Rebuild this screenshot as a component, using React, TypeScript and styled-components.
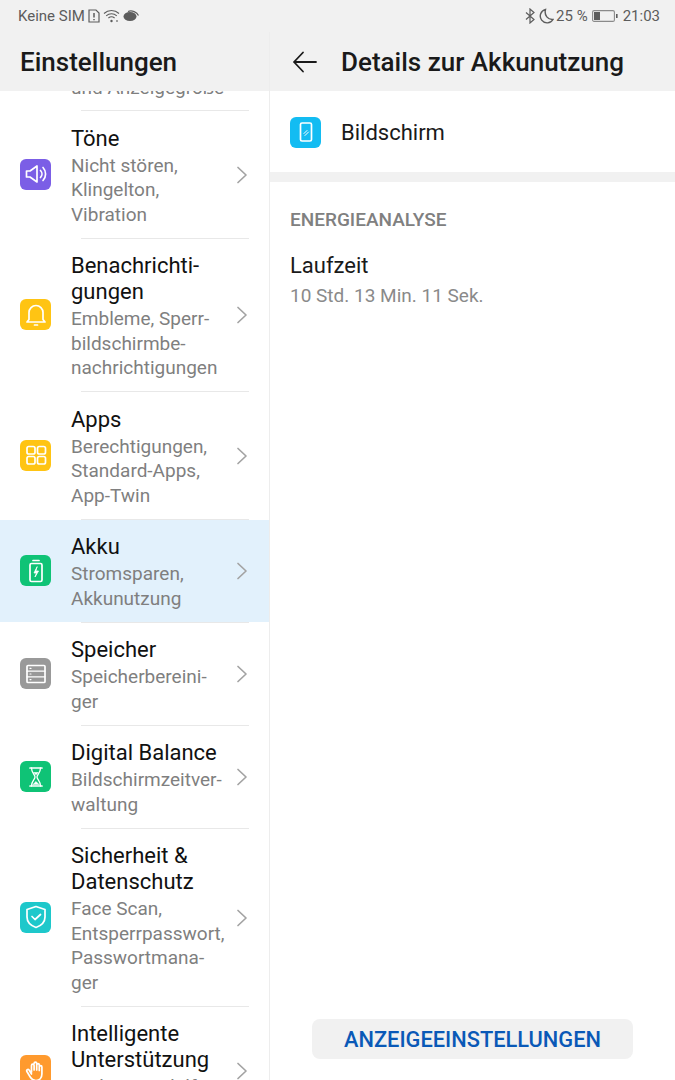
import React from 'react';
import styled, { createGlobalStyle } from 'styled-components';

const GlobalStyle = createGlobalStyle`
  html, body {
    margin: 0;
    padding: 0;
    background: #fff;
    font-family: Roboto, "Liberation Sans", sans-serif;
  }
`;

const Page = styled.div`
  width: 675px;
  height: 1080px;
  display: flex;
  flex-direction: column;
  overflow: hidden;
  background: #fff;
`;

const StatusBar = styled.div`
  height: 32px;
  flex: none;
  display: flex;
  align-items: center;
  justify-content: space-between;
  padding: 0 15px 0 18px;
  background: #f1f1f1;
  color: #5c5c5c;
  font-size: 15px;
`;

const StatusGroup = styled.div`
  display: flex;
  align-items: center;
`;

const StatusIcon = styled.svg<{ $gap?: number }>`
  display: block;
  margin-left: ${(p) => p.$gap ?? 3}px;
`;

const StatusText = styled.span<{ $gap?: number }>`
  margin-left: ${(p) => p.$gap ?? 0}px;
  white-space: nowrap;
`;

const Columns = styled.div`
  flex: 1;
  min-height: 0;
  display: flex;
`;

const LeftPane = styled.div`
  width: 269px;
  flex: none;
  display: flex;
  flex-direction: column;
  border-right: 1px solid #ededed;
  overflow: hidden;
`;

const RightPane = styled.div`
  flex: 1;
  display: flex;
  flex-direction: column;
`;

const Header = styled.div`
  height: 59px;
  flex: none;
  display: flex;
  align-items: center;
  background: #f1f1f1;
`;

const HeaderTitle = styled.h1<{ $left: number }>`
  margin: 0 0 0 ${(p) => p.$left}px;
  font-size: 26px;
  font-weight: 500;
  color: #1a1a1a;
  white-space: nowrap;
`;

const BackButton = styled.svg`
  display: block;
  margin-left: 22px;
`;

/* the row above Töne is scrolled almost out of the list, only its last line peeks out */
const ClippedRow = styled.div`
  height: 19px;
  flex: none;
  padding-left: 71px;
  overflow: hidden;
`;

const ClippedText = styled.div`
  margin-top: -15px;
  font-size: 19px;
  line-height: 24.75px;
  color: #7f7f7f;
  white-space: nowrap;
`;

const Row = styled.div<{ $active?: boolean }>`
  flex: none;
  display: flex;
  align-items: center;
  padding: 0 21px 0 20px;
  background: ${(p) => (p.$active ? '#e2f1fc' : 'transparent')};
`;

const DividerLine = styled.div`
  height: 1px;
  flex: none;
  margin: 0 20px 0 81px;
  background: #e8e8e8;
`;

const IconTile = styled.div<{ $color: string }>`
  width: 31px;
  height: 31px;
  flex: none;
  display: flex;
  align-items: center;
  justify-content: center;
  border-radius: 6px;
  background: ${(p) => p.$color};
`;

const RowText = styled.div`
  flex: 1;
  margin-left: 20px;
  padding: 14.5px 0 10px;
`;

const RowTitle = styled.div`
  font-size: 22px;
  line-height: 25.5px;
  color: #111;
  white-space: nowrap;
`;

const RowSub = styled.div`
  margin-top: 2.5px;
  font-size: 19px;
  line-height: 24.75px;
  color: #7f7f7f;
  white-space: nowrap;
`;

const Line = styled.span`
  display: block;
`;

const Chevron = styled.svg`
  display: block;
  flex: none;
  margin-top: 1px;
`;

const ConsumerRow = styled.div`
  height: 81px;
  flex: none;
  display: flex;
  align-items: center;
  padding: 1px 0 0 20px;
  box-sizing: border-box;
`;

const ConsumerName = styled.div`
  margin-left: 20px;
  font-size: 22px;
  color: #1a1a1a;
`;

const Band = styled.div`
  height: 10px;
  flex: none;
  background: #f1f1f1;
`;

const Section = styled.div`
  padding: 27px 20px 0;
`;

const SectionLabel = styled.div`
  font-size: 19px;
  line-height: 22px;
  font-weight: 500;
  color: #808080;
`;

const StatTitle = styled.div`
  margin-top: 22px;
  font-size: 22px;
  line-height: 26px;
  color: #1a1a1a;
`;

const StatValue = styled.div`
  margin-top: 5px;
  font-size: 19px;
  line-height: 24px;
  color: #8a8a8a;
`;

const Footer = styled.div`
  margin-top: auto;
  padding: 0 42px 21px;
`;

const ActionButton = styled.button`
  width: 100%;
  height: 40px;
  display: block;
  padding: 0;
  border: none;
  border-radius: 8px;
  background: #f1f1f1;
  color: #0a59b7;
  font-family: inherit;
  font-size: 21.8px;
  font-weight: 500;
`;

const Glyph = ({ children }: { children: React.ReactNode }) => (
  <svg width="24" height="24" viewBox="0 0 24 24" fill="none" stroke="#fff" strokeWidth="1.7" strokeLinecap="round" strokeLinejoin="round">
    {children}
  </svg>
);

const SoundIcon = () => (
  <Glyph>
    <path d="M2.500 9h3.500l7-5v16l-7-5H2.500z" />
    <path d="M16.500 8.500a5 5 0 0 1 0 7" />
    <path d="M19 5.500a9.500 9.500 0 0 1 0 13" />
  </Glyph>
);

const BellIcon = () => (
  <Glyph>
    <path d="M12 2.500a7 7 0 0 0-7 7v7L3 19h18l-2-2.500v-7a7 7 0 0 0-7-7z" />
    <path d="M10.500 22h3" />
  </Glyph>
);

const AppsIcon = () => (
  <Glyph>
    <rect x="3" y="3.500" width="8" height="7.500" rx="1.800" />
    <rect x="13.500" y="3.500" width="8" height="7.500" rx="1.800" />
    <rect x="3" y="13.500" width="8" height="7.500" rx="1.800" />
    <rect x="13.500" y="13.500" width="8" height="7.500" rx="1.800" />
  </Glyph>
);

const BatteryIcon = () => (
  <Glyph>
    <rect x="6" y="4.500" width="12" height="18" rx="1.500" />
    <path d="M9 1.500h6" />
    <path d="M13 8l-3 6h2.500l-1.500 4 3.500-6h-2.500z" fill="#fff" strokeWidth="0.8" />
  </Glyph>
);

const StorageIcon = () => (
  <Glyph>
    <rect x="3" y="3.500" width="18" height="17" rx="1" />
    <path d="M3 9.200h18M3 14.800h18" strokeWidth="1.300" />
    <path d="M6 6.400h1M6 12h1M6 17.600h1" strokeWidth="1.100" />
  </Glyph>
);

const HourglassIcon = () => (
  <Glyph>
    <path d="M6 3h12M6 21h12" />
    <path d="M7.500 3c0 5 3.500 6.500 3.500 9s-3.500 4-3.500 9M16.500 3c0 5-3.500 6.500-3.500 9s3.500 4 3.500 9" strokeWidth="1.300" />
    <path d="M9.800 7.500h4.400L12 9.800zM9 19.500l3-3 3 3z" fill="#fff" strokeWidth="0.6" />
  </Glyph>
);

const ShieldIcon = () => (
  <Glyph>
    <path d="M12 1.500l9 3v7.500c0 5-3.500 8.500-9 10.500-5.500-2-9-5.500-9-10.500V4.500z" />
    <path d="M8 11.500l3 3 5.500-5" />
  </Glyph>
);

const HandIcon = () => (
  <Glyph>
    <path d="M7.500 13V6.500a1.300 1.300 0 0 1 2.600 0V11m0-6.500a1.300 1.300 0 0 1 2.600 0V11m0-5a1.300 1.300 0 0 1 2.600 0v5.500m0-3.500a1.300 1.300 0 0 1 2.600 0v7c0 4-2.500 6.500-6 6.500-3 0-4.500-1.500-6-4l-3-5c-.8-1.500 1-2.800 2.200-1.500L7.500 15" />
  </Glyph>
);

const ScreenIcon = () => (
  <Glyph>
    <rect x="6.500" y="3" width="11" height="18" rx="1.500" />
    <path d="M10 13.500l3-3M11 15.500l3.500-3.500" strokeWidth="1" />
  </Glyph>
);

const RowChevron = () => (
  <Chevron width="12" height="20" viewBox="0 0 12 20" fill="none" stroke="#a3a3a3" strokeWidth="1.700" strokeLinecap="round" strokeLinejoin="round">
    <path d="M2 2.500l8 7.500-8 7.500" />
  </Chevron>
);

type SettingsItem = {
  color: string;
  icon: React.ReactNode;
  title: string[];
  sub: string[];
  active?: boolean;
};

const items: SettingsItem[] = [
  { color: '#7b5ee6', icon: <SoundIcon />, title: ['Töne'], sub: ['Nicht stören,', 'Klingelton,', 'Vibration'] },
  {
    color: '#ffc413',
    icon: <BellIcon />,
    title: ['Benachrichti-', 'gungen'],
    sub: ['Embleme, Sperr-', 'bildschirmbe-', 'nachrichtigungen'],
  },
  { color: '#ffc413', icon: <AppsIcon />, title: ['Apps'], sub: ['Berechtigungen,', 'Standard-Apps,', 'App-Twin'] },
  { color: '#0fc376', icon: <BatteryIcon />, title: ['Akku'], sub: ['Stromsparen,', 'Akkunutzung'], active: true },
  { color: '#999999', icon: <StorageIcon />, title: ['Speicher'], sub: ['Speicherbereini-', 'ger'] },
  { color: '#0fc376', icon: <HourglassIcon />, title: ['Digital Balance'], sub: ['Bildschirmzeitver-', 'waltung'] },
  {
    color: '#1ec8cb',
    icon: <ShieldIcon />,
    title: ['Sicherheit &', 'Datenschutz'],
    sub: ['Face Scan,', 'Entsperrpasswort,', 'Passwortmana-', 'ger'],
  },
  {
    color: '#ff9a2e',
    icon: <HandIcon />,
    title: ['Intelligente', 'Unterstützung'],
    sub: ['Bedienungshilfen,', 'HiTouch'],
  },
];

function App() {
  return (
    <Page>
      <GlobalStyle />
      <StatusBar>
        <StatusGroup>
          <StatusText>Keine SIM</StatusText>
          <StatusIcon width="12" height="14" viewBox="0 0 12 14" fill="none" stroke="#5c5c5c" strokeWidth="1.200" $gap={3}>
            <path d="M1 1h7l3 3v9H1z" />
            <path d="M6 4v4.500M6 10v1.200" strokeWidth="1.500" />
          </StatusIcon>
          <StatusIcon width="17" height="14" viewBox="0 0 17 14" fill="none" stroke="#5c5c5c" strokeWidth="1.100" $gap={3}>
            <path d="M1 4.500a11 11 0 0 1 15 0M3.200 6.800a8 8 0 0 1 10.600 0M5.400 9a5 5 0 0 1 6.200 0" />
            <circle cx="8.500" cy="12" r="1.200" fill="#5c5c5c" stroke="none" />
            <path d="M14 11v2" />
          </StatusIcon>
          <StatusIcon width="16" height="12" viewBox="0 0 16 12" $gap={3}>
            <ellipse cx="7" cy="6.500" rx="6.500" ry="4.500" fill="#5c5c5c" />
            <path d="M5 1.500c4-1.500 9 .5 10.500 4" fill="none" stroke="#5c5c5c" strokeWidth="1.200" />
          </StatusIcon>
        </StatusGroup>
        <StatusGroup>
          <StatusIcon width="11" height="16" viewBox="0 0 11 16" fill="none" stroke="#5c5c5c" strokeWidth="1.200">
            <path d="M1 4.500l8 7-4 3.500V1l4 3.500-8 7" />
          </StatusIcon>
          <StatusIcon width="15" height="16" viewBox="0 0 15 16" fill="none" stroke="#5c5c5c" strokeWidth="1.400" $gap={3}>
            <path d="M6.500 1.500a6.800 6.800 0 1 0 7.500 10c-5 .5-9-4-7.500-10z" />
          </StatusIcon>
          <StatusText $gap={2}>25 %</StatusText>
          <StatusIcon width="26" height="14" viewBox="0 0 26 14" $gap={4}>
            <rect x="0.600" y="1.600" width="21.800" height="10.800" rx="1.500" fill="none" stroke="#8a8a8a" strokeWidth="1.100" />
            <rect x="2" y="3" width="6" height="8" fill="#5c5c5c" />
            <rect x="24" y="5" width="1.600" height="4" fill="#5c5c5c" />
          </StatusIcon>
          <StatusText $gap={5}>21:03</StatusText>
        </StatusGroup>
      </StatusBar>
      <Columns>
        <LeftPane>
          <Header>
            <HeaderTitle $left={20}>Einstellungen</HeaderTitle>
          </Header>
          <ClippedRow>
            <ClippedText>und Anzeigegröße</ClippedText>
          </ClippedRow>
          {items.map((item) => (
            <React.Fragment key={item.title.join(' ')}>
              <DividerLine />
              <Row $active={item.active}>
                <IconTile $color={item.color}>{item.icon}</IconTile>
                <RowText>
                  <RowTitle>
                    {item.title.map((line) => (
                      <Line key={line}>{line}</Line>
                    ))}
                  </RowTitle>
                  <RowSub>
                    {item.sub.map((line) => (
                      <Line key={line}>{line}</Line>
                    ))}
                  </RowSub>
                </RowText>
                <RowChevron />
              </Row>
            </React.Fragment>
          ))}
        </LeftPane>
        <RightPane>
          <Header>
            <BackButton width="26" height="26" viewBox="0 0 26 26" fill="none" stroke="#1a1a1a" strokeWidth="1.800" strokeLinecap="round" strokeLinejoin="round">
              <path d="M2 13h22M11 3.500L2 13l9 9.500" />
            </BackButton>
            <HeaderTitle $left={23}>Details zur Akkunutzung</HeaderTitle>
          </Header>
          <ConsumerRow>
            <IconTile $color="#13bcf2">
              <ScreenIcon />
            </IconTile>
            <ConsumerName>Bildschirm</ConsumerName>
          </ConsumerRow>
          <Band />
          <Section>
            <SectionLabel>ENERGIEANALYSE</SectionLabel>
            <StatTitle>Laufzeit</StatTitle>
            <StatValue>10 Std. 13 Min. 11 Sek.</StatValue>
          </Section>
          <Footer>
            <ActionButton>ANZEIGEEINSTELLUNGEN</ActionButton>
          </Footer>
        </RightPane>
      </Columns>
    </Page>
  );
}

export default App;
